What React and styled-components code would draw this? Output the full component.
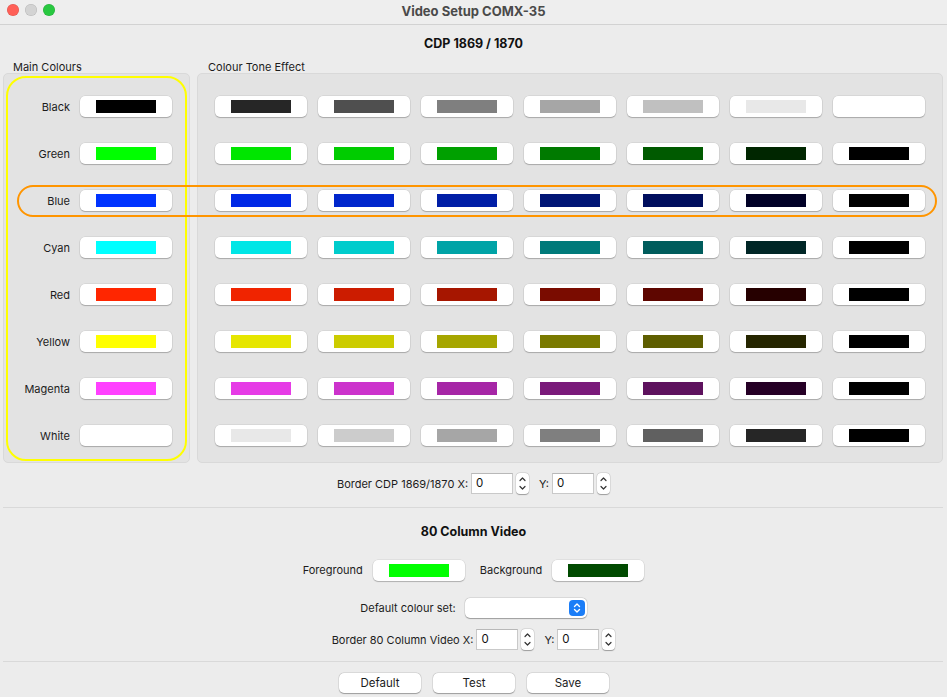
import React from 'react'
import styled, { createGlobalStyle } from 'styled-components'

const mainColours = [
  ['Black', '#000000'],
  ['Green', '#00ff00'],
  ['Blue', '#0033ff'],
  ['Cyan', '#00ffff'],
  ['Red', '#ff2600'],
  ['Yellow', '#ffff00'],
  ['Magenta', '#ff40ff'],
  ['White', '#ffffff'],
]

const tones = [
  ['#262626', '#4f4f4f', '#7f7f7f', '#a6a6a6', '#c0c0c0', '#e8e8e8', '#ffffff'],
  ['#00e600', '#00cc00', '#00a000', '#007a00', '#005a00', '#002600', '#000000'],
  ['#0028e6', '#0026cc', '#001ea6', '#001575', '#000e5e', '#000026', '#000000'],
  ['#00e6e6', '#00cccc', '#00a3a6', '#007a7a', '#005c5c', '#002626', '#000000'],
  ['#f02400', '#cc1c00', '#a61600', '#7a0c00', '#5e0600', '#260000', '#000000'],
  ['#e6e600', '#cccc00', '#a6a600', '#7a7a00', '#5e5e00', '#262600', '#000000'],
  ['#e63be6', '#cc33cc', '#a626a6', '#7a1a7a', '#5e125e', '#260026', '#000000'],
  ['#e8e8e8', '#cccccc', '#a6a6a6', '#7f7f7f', '#606060', '#262626', '#000000'],
]

const GlobalStyle = createGlobalStyle`
  body {
    margin: 0;
    background: #ececec;
    font-family: Inter, "Liberation Sans", Arial, sans-serif;
    font-size: 11px;
    color: #1c1c1c;
  }
`

const Window = styled.div`
  width: 947px;
  height: 697px;
  overflow: hidden;
  background: #ececec;
  display: flex;
  flex-direction: column;
`

const TitleBar = styled.div`
  height: 25px;
  box-sizing: border-box;
  border-bottom: 1px solid #d2d2d2;
  background: #eeeeee;
  position: relative;
  display: flex;
  align-items: center;
  justify-content: center;
  padding-bottom: 3px;
`

const Lights = styled.div`
  position: absolute;
  left: 7px;
  top: 4px;
  display: flex;
  gap: 6px;
`

const Light = styled.span`
  width: 12px;
  height: 12px;
  border-radius: 50%;
  background: ${p => p.$c};
  box-shadow: inset 0 0 0 0.5px rgba(0, 0, 0, 0.15);
`

const Title = styled.div`
  font-weight: 700;
  font-size: 13px;
  color: #4a4a4a;
`

const Heading = styled.div`
  height: ${p => p.$h}px;
  display: flex;
  align-items: center;
  justify-content: center;
  font-weight: 700;
  font-size: 12.5px;
  color: #111;
`

const Groups = styled.div`
  position: relative;
  display: flex;
  gap: 7px;
  padding: 0 4px 0 3px;
`

const Group = styled.div`
  display: flex;
  flex-direction: column;
  width: ${p => p.$w}px;
`

const GroupLabel = styled.div`
  height: 12px;
  line-height: 12px;
  padding-left: ${p => p.$pad}px;
  font-size: 11px;
`

const Box = styled.div`
  height: 390px;
  box-sizing: border-box;
  background: #e3e3e3;
  border: 1px solid #d9d9d9;
  border-radius: 5px;
  padding: ${p => p.$pad};
`

const Yellow = styled.div`
  border: 2px solid #ffff00;
  border-radius: 20px;
  padding-top: 5px;
  display: grid;
  grid-template-columns: 62px 92px;
  grid-auto-rows: 47px;
  column-gap: 10px;
  align-items: center;
`

const ToneGrid = styled.div`
  display: grid;
  grid-template-columns: repeat(7, 92px);
  grid-auto-rows: 47px;
  column-gap: 11px;
  align-items: center;
`

const RowLabel = styled.div`
  text-align: right;
  font-size: 11px;
`

const ColourButton = styled.div`
  width: 92px;
  height: 21px;
  background: #fff;
  border-radius: 5px;
  box-shadow: 0 1px 1px rgba(0, 0, 0, 0.22), 0 0 0 0.5px rgba(0, 0, 0, 0.1);
  display: flex;
  align-items: center;
  justify-content: center;
`

const Swatch = styled.span`
  width: 60px;
  height: 13px;
  background: ${p => p.$c};
`

const Highlight = styled.div`
  position: absolute;
  left: 17px;
  top: 124px;
  width: 920px;
  height: 32px;
  box-sizing: border-box;
  border: 2px solid #ff9500;
  border-radius: 16px;
  pointer-events: none;
`

const Row = styled.div`
  margin-top: ${p => p.$mt}px;
  height: ${p => p.$h || 21}px;
  display: flex;
  align-items: center;
  justify-content: center;
`

const Text = styled.span`
  margin-right: ${p => p.$mr || 0}px;
  margin-left: ${p => p.$ml || 0}px;
`

const NumInput = styled.div`
  width: 42px;
  height: 21px;
  box-sizing: border-box;
  background: #fff;
  border: 1px solid #c9c9c9;
  border-top-color: #b8b8b8;
  padding: 2px 4px;
  line-height: 15px;
  font-size: 11.5px;
  color: #111;
  margin-right: 3px;
`

const SpinBox = styled.div`
  width: 13px;
  height: 21px;
  box-sizing: border-box;
  background: #fff;
  border-radius: 4px;
  box-shadow: 0 0.5px 1px rgba(0, 0, 0, 0.3), 0 0 0 0.5px rgba(0, 0, 0, 0.1);
  display: flex;
  align-items: center;
  justify-content: center;
`

const Divider = styled.div`
  margin: ${p => p.$m};
  height: 1px;
  background: #d9d9d9;
  margin-left: 3px;
  margin-right: 4px;
`

const Select = styled.div`
  width: 122px;
  height: 20px;
  box-sizing: border-box;
  background: #fff;
  border-radius: 5px;
  box-shadow: 0 0.5px 1px rgba(0, 0, 0, 0.3), 0 0 0 0.5px rgba(0, 0, 0, 0.1);
  display: flex;
  align-items: center;
  justify-content: flex-end;
  padding-right: 2px;
  margin-left: 9px;
`

const SelectArrow = styled.div`
  width: 16px;
  height: 16px;
  border-radius: 4px;
  background: #1b7df7;
  display: flex;
  align-items: center;
  justify-content: center;
`

const Buttons = styled.div`
  margin-top: 11px;
  display: flex;
  justify-content: center;
  gap: 12px;
  padding-left: 1px;
`

const PushButton = styled.button`
  width: 82px;
  height: 20px;
  border: none;
  background: #fff;
  border-radius: 5px;
  box-shadow: 0 0.5px 1px rgba(0, 0, 0, 0.3), 0 0 0 0.5px rgba(0, 0, 0, 0.1);
  font-family: inherit;
  font-size: 11.5px;
  color: #1c1c1c;
  padding: 0;
`

const Spinner = () => (
  <SpinBox>
    <svg width="9" height="17" viewBox="0 0 9 17">
      <path d="M2 5.5 L4.5 3 L7 5.5" fill="none" stroke="#333" strokeWidth="1.2" strokeLinecap="round" strokeLinejoin="round" />
      <path d="M2 11.5 L4.5 14 L7 11.5" fill="none" stroke="#333" strokeWidth="1.2" strokeLinecap="round" strokeLinejoin="round" />
    </svg>
  </SpinBox>
)

const BorderRow = ({ label, mt }) => (
  <Row $mt={mt}>
    <Text $mr={3}>{label}</Text>
    <NumInput>0</NumInput>
    <Spinner />
    <Text $ml={10} $mr={3}>Y:</Text>
    <NumInput>0</NumInput>
    <Spinner />
  </Row>
)

export default function App() {
  return (
    <Window>
      <GlobalStyle />
      <TitleBar>
        <Lights>
          <Light $c="#ff5f57" />
          <Light $c="#d3d3d3" />
          <Light $c="#28c840" />
        </Lights>
        <Title>Video Setup COMX-35</Title>
      </TitleBar>

      <Heading $h={36}>CDP 1869 / 1870</Heading>

      <Groups>
        <Group $w={187}>
          <GroupLabel $pad={10}>Main Colours</GroupLabel>
          <Box $pad="2px 2px 1px">
            <Yellow>
              {mainColours.map(([name, c]) => (
                <React.Fragment key={name}>
                  <RowLabel>{name}</RowLabel>
                  <ColourButton>
                    {c !== '#ffffff' && <Swatch $c={c} />}
                  </ColourButton>
                </React.Fragment>
              ))}
            </Yellow>
          </Box>
        </Group>
        <Group $w={746}>
          <GroupLabel $pad={11}>Colour Tone Effect</GroupLabel>
          <Box $pad="9px 0 0 17px">
            <ToneGrid>
              {tones.flatMap((row, r) =>
                row.map((c, i) => (
                  <ColourButton key={r + '-' + i}>
                    {c !== '#ffffff' && <Swatch $c={c} />}
                  </ColourButton>
                ))
              )}
            </ToneGrid>
          </Box>
        </Group>
        <Highlight />
      </Groups>

      <BorderRow label="Border CDP 1869/1870 X:" mt={10} />

      <Divider $m="13px 0 0" />

      <Heading $h={46}>80 Column Video</Heading>

      <Row $mt={5} $h={22}>
        <Text $mr={10}>Foreground</Text>
        <ColourButton><Swatch $c="#00ff00" /></ColourButton>
        <Text $ml={15} $mr={10}>Background</Text>
        <ColourButton><Swatch $c="#004a00" /></ColourButton>
      </Row>

      <Row $mt={17} $h={20}>
        <Text>Default colour set:</Text>
        <Select>
          <SelectArrow>
            <svg width="10" height="12" viewBox="0 0 10 12">
              <path d="M2.5 4.5 L5 2 L7.5 4.5" fill="none" stroke="#fff" strokeWidth="1.4" strokeLinecap="round" strokeLinejoin="round" />
              <path d="M2.5 7.5 L5 10 L7.5 7.5" fill="none" stroke="#fff" strokeWidth="1.4" strokeLinecap="round" strokeLinejoin="round" />
            </svg>
          </SelectArrow>
        </Select>
      </Row>

      <BorderRow label="Border 80 Column Video X:" mt={11} />

      <Divider $m="11px 0 0" />

      <Buttons>
        <PushButton>Default</PushButton>
        <PushButton>Test</PushButton>
        <PushButton>Save</PushButton>
      </Buttons>
    </Window>
  )
}
